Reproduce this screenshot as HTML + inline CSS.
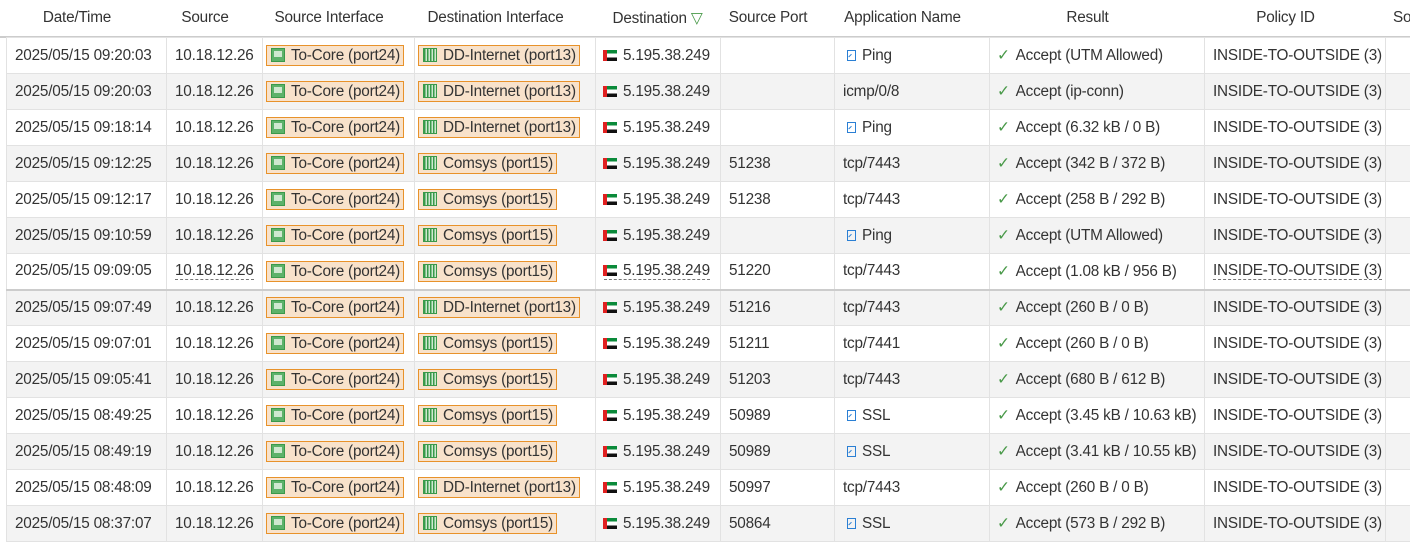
<!DOCTYPE html><html><head><style>
body{margin:0;width:1410px;height:556px;overflow:hidden;background:#fff;font-family:"Liberation Sans",sans-serif;font-size:15.3px;color:#333;letter-spacing:-0.2px}
.hdr{position:absolute;left:0;top:0;height:38px;width:1410px;background:#fff;border-bottom:2px solid #ccc;box-sizing:border-box}
.hdr div{position:absolute;top:9px;text-align:center;color:#333}
table{position:absolute;left:6px;top:37px;border-collapse:collapse;table-layout:fixed;width:1420px}
td{height:36px;border:1px solid #e2e2e2;padding:0 0 0 8px;white-space:nowrap;overflow:hidden;box-sizing:border-box}
tr:nth-child(even) td{background:#f3f3f3}
.b{display:inline-block;background:#f8e2cb;border:1px solid #e8922a;height:19px;line-height:19px;padding:0 3px 0 24px;position:relative;margin-left:-5px}
.b i{position:absolute;left:4px;top:2px;width:14px;height:14px;border:1px solid #3a9a4a;background:#5db26a;box-sizing:border-box}
.b i.s:after{content:"";position:absolute;left:2px;top:2px;width:8px;height:6px;background:#cfe8d0}
.b i.d{background:repeating-linear-gradient(90deg,#3a9a4a 0 1.5px,#cfe8d0 1.5px 3px)}
.f{display:inline-block;width:14px;height:11px;vertical-align:-1px;margin-right:6px;margin-left:-1px;background:linear-gradient(#0a8a3a 0 33%,#fff 33% 66%,#111 66%);border-left:4px solid #e02020;box-sizing:border-box}
.a{display:inline-block;width:9px;height:11px;border:1px solid #2a7fd4;box-sizing:border-box;margin:0 6px 0 4px;vertical-align:-1px;position:relative}
.a:after{content:"";position:absolute;left:1px;bottom:1px;width:4px;height:4px;border-left:1.5px solid #2a7fd4;transform:rotate(45deg)}
.c{color:#4a9a4a;margin-right:6px;margin-left:-1px}
.u{border-bottom:1px dashed #777}
</style></head><body>
<div class="hdr">
<div style="left:6px;width:142px">Date/Time</div>
<div style="left:166px;width:78px">Source</div>
<div style="left:262px;width:134px">Source Interface</div>
<div style="left:414px;width:163px">Destination Interface</div>
<div style="left:595px;width:125px">Destination <span style="color:#4a9a4a">▽</span></div>
<div style="left:720px;width:96px">Source Port</div>
<div style="left:834px;width:137px">Application Name</div>
<div style="left:989px;width:197px">Result</div>
<div style="left:1204px;width:163px">Policy ID</div>
<div style="left:1385px;width:40px;text-align:left;padding-left:8px">So</div>
</div>
<table>
<colgroup><col style="width:160px"><col style="width:96px"><col style="width:152px"><col style="width:181px"><col style="width:125px"><col style="width:114px"><col style="width:155px"><col style="width:215px"><col style="width:181px"><col style="width:41px"></colgroup>
<tbody>
<tr><td>2025/05/15 09:20:03</td><td>10.18.12.26</td><td><span class="b"><i class="s"></i>To-Core (port24)</span></td><td><span class="b"><i class="d"></i>DD-Internet (port13)</span></td><td><span class="f"></span>5.195.38.249</td><td></td><td><span class="a"></span>Ping</td><td><span class="c">✓</span>Accept (UTM Allowed)</td><td>INSIDE-TO-OUTSIDE (3)</td><td></td></tr>
<tr><td>2025/05/15 09:20:03</td><td>10.18.12.26</td><td><span class="b"><i class="s"></i>To-Core (port24)</span></td><td><span class="b"><i class="d"></i>DD-Internet (port13)</span></td><td><span class="f"></span>5.195.38.249</td><td></td><td>icmp/0/8</td><td><span class="c">✓</span>Accept (ip-conn)</td><td>INSIDE-TO-OUTSIDE (3)</td><td></td></tr>
<tr><td>2025/05/15 09:18:14</td><td>10.18.12.26</td><td><span class="b"><i class="s"></i>To-Core (port24)</span></td><td><span class="b"><i class="d"></i>DD-Internet (port13)</span></td><td><span class="f"></span>5.195.38.249</td><td></td><td><span class="a"></span>Ping</td><td><span class="c">✓</span>Accept (6.32 kB / 0 B)</td><td>INSIDE-TO-OUTSIDE (3)</td><td></td></tr>
<tr><td>2025/05/15 09:12:25</td><td>10.18.12.26</td><td><span class="b"><i class="s"></i>To-Core (port24)</span></td><td><span class="b"><i class="d"></i>Comsys (port15)</span></td><td><span class="f"></span>5.195.38.249</td><td>51238</td><td>tcp/7443</td><td><span class="c">✓</span>Accept (342 B / 372 B)</td><td>INSIDE-TO-OUTSIDE (3)</td><td></td></tr>
<tr><td>2025/05/15 09:12:17</td><td>10.18.12.26</td><td><span class="b"><i class="s"></i>To-Core (port24)</span></td><td><span class="b"><i class="d"></i>Comsys (port15)</span></td><td><span class="f"></span>5.195.38.249</td><td>51238</td><td>tcp/7443</td><td><span class="c">✓</span>Accept (258 B / 292 B)</td><td>INSIDE-TO-OUTSIDE (3)</td><td></td></tr>
<tr><td>2025/05/15 09:10:59</td><td>10.18.12.26</td><td><span class="b"><i class="s"></i>To-Core (port24)</span></td><td><span class="b"><i class="d"></i>Comsys (port15)</span></td><td><span class="f"></span>5.195.38.249</td><td></td><td><span class="a"></span>Ping</td><td><span class="c">✓</span>Accept (UTM Allowed)</td><td>INSIDE-TO-OUTSIDE (3)</td><td></td></tr>
<tr><td style="border-bottom:2px solid #ccc">2025/05/15 09:09:05</td><td style="border-bottom:2px solid #ccc"><span class="u">10.18.12.26</span></td><td style="border-bottom:2px solid #ccc"><span class="b"><i class="s"></i>To-Core (port24)</span></td><td style="border-bottom:2px solid #ccc"><span class="b"><i class="d"></i>Comsys (port15)</span></td><td style="border-bottom:2px solid #ccc"><span class="u"><span class="f"></span>5.195.38.249</span></td><td style="border-bottom:2px solid #ccc">51220</td><td style="border-bottom:2px solid #ccc">tcp/7443</td><td style="border-bottom:2px solid #ccc"><span class="c">✓</span>Accept (1.08 kB / 956 B)</td><td style="border-bottom:2px solid #ccc"><span class="u">INSIDE-TO-OUTSIDE (3)</span></td><td style="border-bottom:2px solid #ccc"></td></tr>
<tr><td>2025/05/15 09:07:49</td><td>10.18.12.26</td><td><span class="b"><i class="s"></i>To-Core (port24)</span></td><td><span class="b"><i class="d"></i>DD-Internet (port13)</span></td><td><span class="f"></span>5.195.38.249</td><td>51216</td><td>tcp/7443</td><td><span class="c">✓</span>Accept (260 B / 0 B)</td><td>INSIDE-TO-OUTSIDE (3)</td><td></td></tr>
<tr><td>2025/05/15 09:07:01</td><td>10.18.12.26</td><td><span class="b"><i class="s"></i>To-Core (port24)</span></td><td><span class="b"><i class="d"></i>Comsys (port15)</span></td><td><span class="f"></span>5.195.38.249</td><td>51211</td><td>tcp/7441</td><td><span class="c">✓</span>Accept (260 B / 0 B)</td><td>INSIDE-TO-OUTSIDE (3)</td><td></td></tr>
<tr><td>2025/05/15 09:05:41</td><td>10.18.12.26</td><td><span class="b"><i class="s"></i>To-Core (port24)</span></td><td><span class="b"><i class="d"></i>Comsys (port15)</span></td><td><span class="f"></span>5.195.38.249</td><td>51203</td><td>tcp/7443</td><td><span class="c">✓</span>Accept (680 B / 612 B)</td><td>INSIDE-TO-OUTSIDE (3)</td><td></td></tr>
<tr><td>2025/05/15 08:49:25</td><td>10.18.12.26</td><td><span class="b"><i class="s"></i>To-Core (port24)</span></td><td><span class="b"><i class="d"></i>Comsys (port15)</span></td><td><span class="f"></span>5.195.38.249</td><td>50989</td><td><span class="a"></span>SSL</td><td><span class="c">✓</span>Accept (3.45 kB / 10.63 kB)</td><td>INSIDE-TO-OUTSIDE (3)</td><td></td></tr>
<tr><td>2025/05/15 08:49:19</td><td>10.18.12.26</td><td><span class="b"><i class="s"></i>To-Core (port24)</span></td><td><span class="b"><i class="d"></i>Comsys (port15)</span></td><td><span class="f"></span>5.195.38.249</td><td>50989</td><td><span class="a"></span>SSL</td><td><span class="c">✓</span>Accept (3.41 kB / 10.55 kB)</td><td>INSIDE-TO-OUTSIDE (3)</td><td></td></tr>
<tr><td>2025/05/15 08:48:09</td><td>10.18.12.26</td><td><span class="b"><i class="s"></i>To-Core (port24)</span></td><td><span class="b"><i class="d"></i>DD-Internet (port13)</span></td><td><span class="f"></span>5.195.38.249</td><td>50997</td><td>tcp/7443</td><td><span class="c">✓</span>Accept (260 B / 0 B)</td><td>INSIDE-TO-OUTSIDE (3)</td><td></td></tr>
<tr><td>2025/05/15 08:37:07</td><td>10.18.12.26</td><td><span class="b"><i class="s"></i>To-Core (port24)</span></td><td><span class="b"><i class="d"></i>Comsys (port15)</span></td><td><span class="f"></span>5.195.38.249</td><td>50864</td><td><span class="a"></span>SSL</td><td><span class="c">✓</span>Accept (573 B / 292 B)</td><td>INSIDE-TO-OUTSIDE (3)</td><td></td></tr>
</tbody></table>
</body></html>
